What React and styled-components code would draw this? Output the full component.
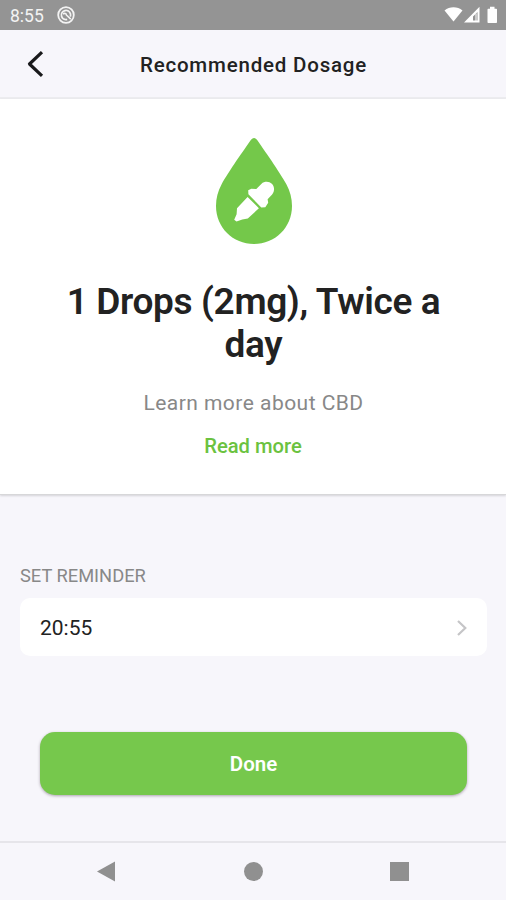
import React from 'react';
import styled, { createGlobalStyle } from 'styled-components';

const GlobalStyle = createGlobalStyle`
  * {
    box-sizing: border-box;
  }

  body {
    margin: 0;
    background: #f7f6fb;
    font-family: Roboto, "Liberation Sans", sans-serif;
    color: #222;
  }

  button {
    font-family: inherit;
    border: 0;
    padding: 0;
    background: none;
  }
`;

const StatusBar = () => {
  return (
    <StatusWrapper>
      <Clock>8:55</Clock>
      <svg width="18" height="18" viewBox="0 0 18 18" fill="none" stroke="#f3f3f3">
        <circle cx="9" cy="9" r="7.8" strokeWidth="1.8" />
        <circle cx="9" cy="9" r="4.6" strokeWidth="1.7" strokeDasharray="24 5" transform="rotate(75 9 9)" />
        <path d="M6 8C7.6 6.8 9.4 7.6 9.4 9L13.8 13.2" strokeWidth="1.6" />
      </svg>
      <StatusIcons width="56" height="18" viewBox="0 0 56 18" fill="#fff">
        <path d="M0.5 4.6C5.6 0.2 13.4 0.2 18.5 4.6L9.5 15.6Z" />
        <path fillRule="evenodd" d="M20 16.5L35.5 0.8V16.5ZM29 14.5H33.5V6L29 10.5Z" />
        <path d="M32 7.5V15" stroke="#fff" strokeWidth="1" />
        <path d="M43.5 3.5Q43.5 2.7 44.3 2.7H46V0.8H50.5V2.7H52.2Q53 2.7 53 3.5V16.2Q53 17 52.2 17H44.3Q43.5 17 43.5 16.2Z" />
      </StatusIcons>
    </StatusWrapper>
  );
};

const Header = ({ title }) => {
  return (
    <HeaderWrapper>
      <BackButton aria-label="Back">
        <svg width="18" height="28" viewBox="0 0 18 28" fill="none" stroke="#19191b" strokeWidth="3.2">
          <path d="M16 2.2L3.5 14L16 25.8" strokeLinejoin="round" />
        </svg>
      </BackButton>
      <HeaderTitle>{title}</HeaderTitle>
    </HeaderWrapper>
  );
};

const DropLogo = () => {
  return (
    <DropSvg width="78" height="108" viewBox="215 137 78 108">
      <path
        fill="#74c84a"
        d="M251 139.8Q254 136.2 257 139.8C264 150 279 171 286.5 184.5C290 191 292 198 292 206C292 227.5 275 244 254 244C233 244 216 227.5 216 206C216 198 218 191 221.5 184.5C229 171 244 150 251 139.8Z"
      />
      <g fill="#fff">
        <path d="M248.2 190.2L251.3 188.7L256.3 189.1L261.3 183.9C267 179.2 274.8 183.2 274 190C273.8 192.5 272.5 194.3 270.7 196L267.6 199.2L268.2 202.7L265.3 207.2L261.3 207.5L248.4 194.2Z" />
        <path d="M247.6 197L258.9 208.2L247.8 218.5L242.3 219.4L236.5 221.6L234.2 219.8L236.6 214.3L237 208.3Z" />
      </g>
    </DropSvg>
  );
};

const ReminderField = ({ label, value }) => {
  return (
    <Reminder>
      <ReminderLabel>{label}</ReminderLabel>
      <ReminderRow>
        {value}
        <svg width="12" height="18" viewBox="0 0 12 18" fill="none" stroke="#c5c5c7" strokeWidth="2.2">
          <path d="M2 2L9.3 9L2 16" />
        </svg>
      </ReminderRow>
    </Reminder>
  );
};

const App = () => {
  return (
    <>
      <GlobalStyle />
      <Screen>
        <StatusBar />
        <Header title="Recommended Dosage" />
        <DosagePanel>
          <DropLogo />
          <Dosage>1 Drops (2mg), Twice a day</Dosage>
          <Hint>Learn more about CBD</Hint>
          <ReadMore>Read more</ReadMore>
        </DosagePanel>
        <ReminderField label="SET REMINDER" value="20:55" />
        <DoneButton>Done</DoneButton>
        <NavBar>
          <svg width="20" height="22" viewBox="0 0 20 22">
            <path d="M1 10.5L19 0.5V20.5Z" fill="#909090" />
          </svg>
          <NavHome />
          <NavRecent />
        </NavBar>
      </Screen>
    </>
  );
};

export default App;

const Screen = styled.div`
  display: flex;
  flex-direction: column;
  width: 506px;
  height: 900px;
  overflow: hidden;
  background: #f7f6fb;
`;

const StatusWrapper = styled.div`
  display: flex;
  align-items: center;
  flex: none;
  height: 30px;
  padding: 0 6px 0 10px;
  background: #949494;
`;

const Clock = styled.span`
  width: 47px;
  padding-top: 1px;
  font-size: 17.5px;
  color: #f3f3f3;
`;

const StatusIcons = styled.svg`
  margin-left: auto;
`;

const HeaderWrapper = styled.header`
  display: grid;
  grid-template-columns: 60px 1fr 60px;
  align-items: center;
  flex: none;
  height: 69px;
  border-bottom: 2px solid #ececef;
`;

const BackButton = styled.button`
  display: flex;
  padding-left: 26px;
`;

const HeaderTitle = styled.h1`
  margin: 3px 0 0 1px;
  font-size: 20.5px;
  font-weight: 500;
  letter-spacing: 0.8px;
  text-align: center;
  white-space: nowrap;
`;

const DosagePanel = styled.section`
  display: flex;
  flex-direction: column;
  align-items: center;
  flex: none;
  height: 396px;
  padding: 38px 50px 0;
  background: #fff;
  border-bottom: 1px solid #d7d7d9;
  box-shadow: 0 1px 2px rgba(0, 0, 0, 0.14);
`;

const DropSvg = styled.svg`
  margin-left: 2px;
`;

const Dosage = styled.h2`
  margin: 35px 0 0 1px;
  font-size: 37px;
  font-weight: 600;
  line-height: 43px;
  letter-spacing: -0.35px;
  text-align: center;
`;

const Hint = styled.p`
  margin: 24px 0 0 1px;
  font-size: 21px;
  line-height: 26px;
  letter-spacing: 0.47px;
  color: #888;
`;

const ReadMore = styled.button`
  margin-top: 17px;
  font-size: 20.2px;
  font-weight: 500;
  line-height: 26px;
  color: #6bc240;
`;

const Reminder = styled.section`
  margin: 70px 19px 0 20px;
`;

const ReminderLabel = styled.div`
  font-size: 18.3px;
  line-height: 22px;
  color: #888;
`;

const ReminderRow = styled.div`
  display: flex;
  align-items: center;
  justify-content: space-between;
  height: 58px;
  margin-top: 11px;
  padding: 1px 19px 0 20px;
  border-radius: 10px;
  background: #fff;
  font-size: 21px;
`;

const DoneButton = styled.button`
  flex: none;
  height: 63px;
  margin: 76px 39px 0 40px;
  padding-top: 1px;
  border-radius: 15px;
  background: #76c84c;
  box-shadow: 0 1px 3px rgba(60, 40, 60, 0.4);
  font-size: 20.5px;
  font-weight: 600;
  color: #fff;
`;

const NavBar = styled.nav`
  display: flex;
  align-items: center;
  justify-content: space-between;
  flex: none;
  height: 59px;
  margin-top: auto;
  padding: 0 97px 0 96px;
  border-top: 2px solid #e6e5ea;
`;

const NavHome = styled.span`
  width: 19px;
  height: 19px;
  border-radius: 50%;
  background: #909090;
`;

const NavRecent = styled.span`
  width: 19px;
  height: 19px;
  background: #909090;
`;
